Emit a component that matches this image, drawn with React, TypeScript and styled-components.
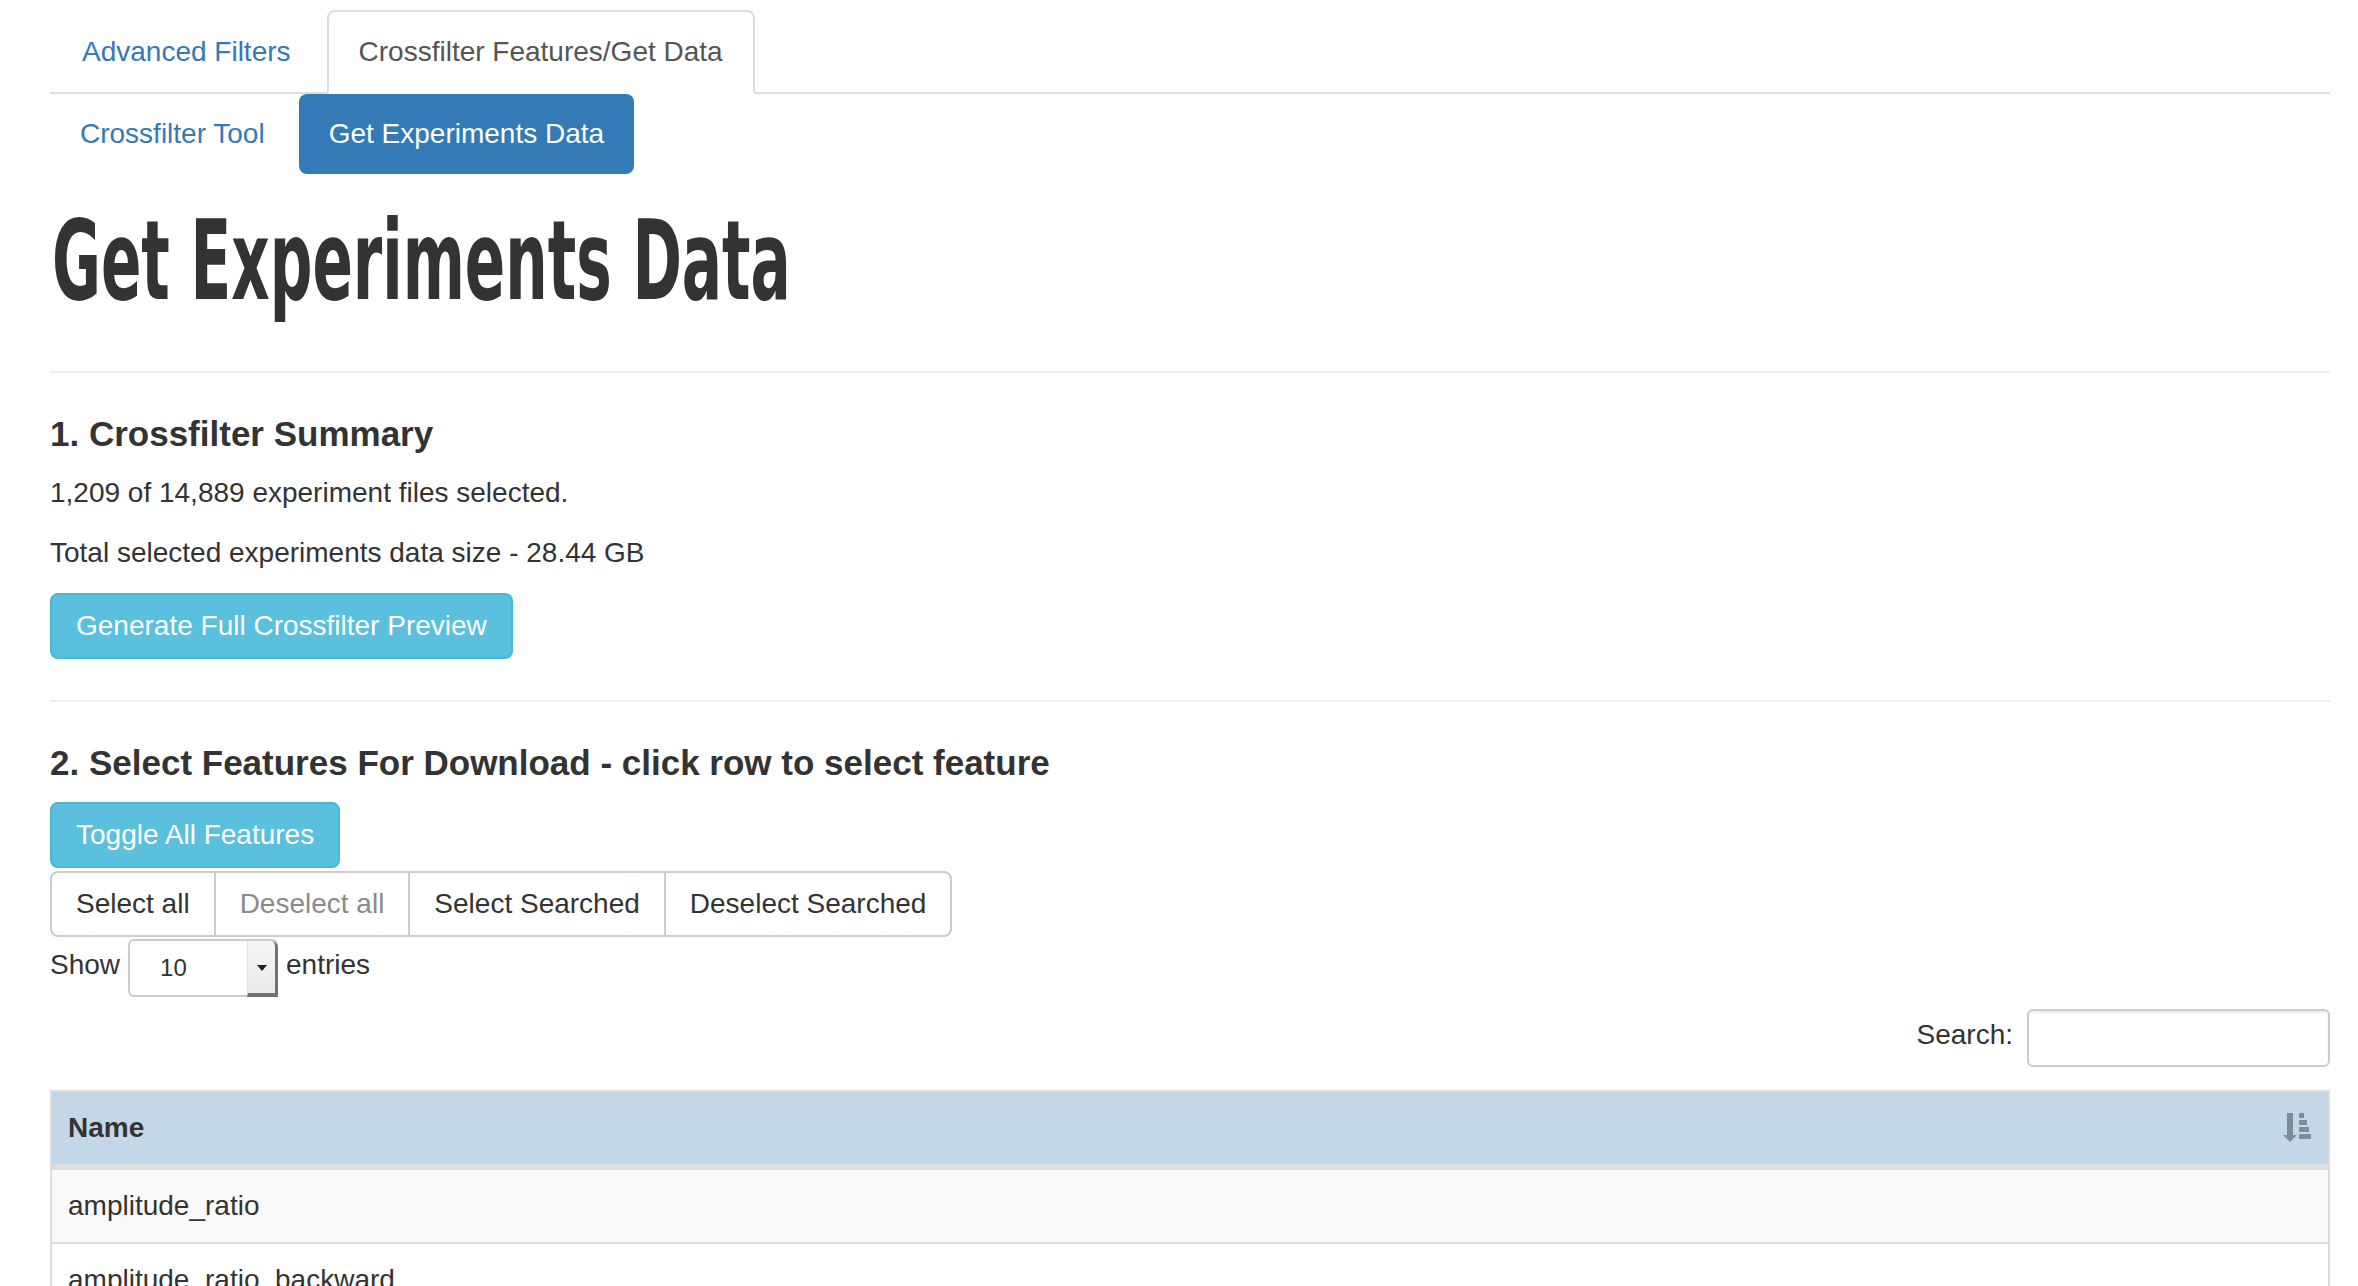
import React, { useLayoutEffect, useRef, useState } from "react";
import styled, { createGlobalStyle, css } from "styled-components";

const GlobalStyle = createGlobalStyle`
  html, body { margin: 0; padding: 0; background: #fff; }
  body {
    font-family: "Liberation Sans", Arial, Helvetica, sans-serif;
    font-size: 28px;
    line-height: 40px;
    color: #333;
  }
  * { box-sizing: border-box; }
`;

const Page = styled.div`
  padding: 10px 28px 0 50px;
`;

const Tabs = styled.ul`
  display: flex;
  list-style: none;
  margin: 0;
  padding: 0;
  border-bottom: 2px solid #ddd;
`;

const TabItem = styled.li`
  margin: 0 4px -2px 0;
`;

const TabLink = styled.a<{ $active?: boolean }>`
  display: block;
  padding: 20px 30px;
  line-height: 40px;
  border: 2px solid transparent;
  border-radius: 8px 8px 0 0;
  text-decoration: none;
  color: #337ab7;
  cursor: pointer;
  ${(p) =>
    p.$active &&
    css`
      color: #555;
      background: #fff;
      border-color: #ddd #ddd transparent;
    `}
`;

const Pills = styled.ul`
  display: flex;
  gap: 4px;
  list-style: none;
  margin: 0;
  padding: 0;
`;

const PillLink = styled.a<{ $active?: boolean }>`
  display: block;
  padding: 20px 30px;
  line-height: 40px;
  border-radius: 8px;
  text-decoration: none;
  cursor: pointer;
  color: ${(p) => (p.$active ? "#fff" : "#337ab7")};
  background: ${(p) => (p.$active ? "#337ab7" : "transparent")};
`;

const Title = styled.h1`
  margin: 32px 0 55px;
  padding-left: 2px;
  font-family: "DejaVu Sans Condensed", "DejaVu Sans", sans-serif;
  font-weight: bold;
  font-size: 110px;
  line-height: 110px;
  height: 110px;
  color: #333;
  white-space: nowrap;
`;

const TitleText = styled.span`
  display: inline-block;
  transform-origin: 0 50%;
`;

const Divider = styled.hr`
  margin: 41px 0;
  height: 0;
  border: 0;
  border-top: 2px solid #eee;
`;

const SectionTitle = styled.h3`
  margin: 0 0 19px;
  font-size: 35px;
  line-height: 40px;
  font-weight: bold;
  color: #333;
`;

const Para = styled.p`
  margin: 0 0 20px;
`;

const InfoButton = styled.button<{ $gapBelow?: number }>`
  display: block;
  width: fit-content;
  margin: 0 0 ${(p) => p.$gapBelow ?? 0}px;
  padding: 11px 24px;
  font: inherit;
  line-height: 40px;
  color: #fff;
  background: #5bc0de;
  border: 2px solid #46b8da;
  border-radius: 8px;
  cursor: pointer;
`;

const ButtonGroup = styled.div`
  display: flex;
  width: fit-content;
`;

const GroupButton = styled.button<{ $muted?: boolean }>`
  margin: 0 0 0 -2px;
  padding: 11px 24px;
  font: inherit;
  line-height: 40px;
  color: ${(p) => (p.$muted ? "#8a8a8a" : "#333")};
  background: #fff;
  border: 2px solid #ccc;
  border-radius: 0;
  cursor: pointer;
  &:first-child {
    margin-left: 0;
    border-radius: 8px 0 0 8px;
  }
  &:last-child {
    border-radius: 0 8px 8px 0;
  }
`;

const LengthRow = styled.div`
  display: flex;
  align-items: center;
  gap: 8px;
  margin-top: 2px;
  height: 58px;
`;

const InlineLabel = styled.label`
  padding-bottom: 6px;
`;

const SelectBox = styled.div`
  display: flex;
  width: 150px;
  height: 58px;
  border: 2px solid #ccc;
  border-right: 0;
  border-radius: 6px;
  background: #fff;
`;

const SelectValue = styled.span`
  flex: 1;
  padding-left: 30px;
  font-size: 24px;
  line-height: 54px;
  color: #333;
`;

const SelectArrow = styled.span`
  display: flex;
  align-items: center;
  justify-content: center;
  width: 31px;
  margin: 0 0 -2px;
  background: linear-gradient(#f7f7f7, #e9e9e9);
  border-left: 1px solid #e2e2e2;
  border-right: 3px solid #727272;
  border-bottom: 4px solid #727272;
  border-top-right-radius: 6px;
  &::after {
    content: "";
    width: 0;
    height: 0;
    margin-top: 2px;
    border-left: 5px solid transparent;
    border-right: 5px solid transparent;
    border-top: 6px solid #222;
  }
`;

const FilterRow = styled.div`
  display: flex;
  justify-content: flex-end;
  align-items: center;
  margin-top: 12px;
`;

const SearchInput = styled.input`
  width: 303px;
  height: 58px;
  margin-left: 14px;
  padding: 0 12px;
  font: inherit;
  border: 2px solid #ccc;
  border-radius: 6px;
  box-shadow: inset 0 2px 2px rgba(0, 0, 0, 0.075);
  outline: none;
`;

const Table = styled.table`
  width: 100%;
  margin-top: 23px;
  border-collapse: separate;
  border-spacing: 0;
  border: 2px solid #ddd;
  border-bottom: 0;
`;

const HeadCell = styled.th`
  padding: 16px;
  line-height: 40px;
  text-align: left;
  font-weight: bold;
  background: #c4d7e7;
  border-bottom: 4px solid #ddd;
`;

const HeadInner = styled.div`
  display: flex;
  justify-content: space-between;
  align-items: center;
`;

const Row = styled.tr<{ $odd?: boolean }>`
  background: ${(p) => (p.$odd ? "#f9f9f9" : "#fff")};
  cursor: pointer;
`;

const Cell = styled.td`
  padding: 16px;
  line-height: 40px;
  border-top: 2px solid #ddd;
`;

const SortIcon = () => (
  <svg width="30" height="30" viewBox="0 0 30 30" fill="#7f8b97">
    <rect x="5" y="0" width="6" height="23" />
    <polygon points="1,22 15,22 8,29" />
    <rect x="17" y="0" width="5" height="5" rx="0.5" />
    <rect x="17" y="7" width="8" height="5" rx="0.5" />
    <rect x="17" y="14" width="10" height="5" rx="0.5" />
    <rect x="17" y="21" width="12" height="5" rx="0.5" />
  </svg>
);

const features = ["amplitude_ratio", "amplitude_ratio_backward"];

export default function App() {
  const titleRef = useRef<HTMLSpanElement>(null);
  const [scale, setScale] = useState(1);

  useLayoutEffect(() => {
    if (titleRef.current) {
      const w = titleRef.current.offsetWidth;
      if (w > 0) setScale(739 / w);
    }
  }, []);

  return (
    <>
      <GlobalStyle />
      <Page>
        <Tabs>
          <TabItem>
            <TabLink>Advanced Filters</TabLink>
          </TabItem>
          <TabItem>
            <TabLink $active>Crossfilter Features/Get Data</TabLink>
          </TabItem>
        </Tabs>
        <Pills>
          <li>
            <PillLink>Crossfilter Tool</PillLink>
          </li>
          <li>
            <PillLink $active>Get Experiments Data</PillLink>
          </li>
        </Pills>

        <Title>
          <TitleText ref={titleRef} style={{ transform: `scaleX(${scale})` }}>
            Get Experiments Data
          </TitleText>
        </Title>
        <Divider />

        <SectionTitle>1. Crossfilter Summary</SectionTitle>
        <Para>1,209 of 14,889 experiment files selected.</Para>
        <Para>Total selected experiments data size - 28.44 GB</Para>
        <InfoButton>Generate Full Crossfilter Preview</InfoButton>

        <Divider />

        <SectionTitle>2. Select Features For Download - click row to select feature</SectionTitle>
        <InfoButton $gapBelow={3}>Toggle All Features</InfoButton>
        <ButtonGroup>
          <GroupButton>Select all</GroupButton>
          <GroupButton $muted>Deselect all</GroupButton>
          <GroupButton>Select Searched</GroupButton>
          <GroupButton>Deselect Searched</GroupButton>
        </ButtonGroup>

        <LengthRow>
          <InlineLabel>Show</InlineLabel>
          <SelectBox>
            <SelectValue>10</SelectValue>
            <SelectArrow />
          </SelectBox>
          <InlineLabel>entries</InlineLabel>
        </LengthRow>

        <FilterRow>
          <InlineLabel htmlFor="feature-search">Search:</InlineLabel>
          <SearchInput id="feature-search" type="search" />
        </FilterRow>

        <Table>
          <thead>
            <tr>
              <HeadCell>
                <HeadInner>
                  <span>Name</span>
                  <SortIcon />
                </HeadInner>
              </HeadCell>
            </tr>
          </thead>
          <tbody>
            {features.map((f, i) => (
              <Row key={f} $odd={i % 2 === 0}>
                <Cell>{f}</Cell>
              </Row>
            ))}
          </tbody>
        </Table>
      </Page>
    </>
  );
}
